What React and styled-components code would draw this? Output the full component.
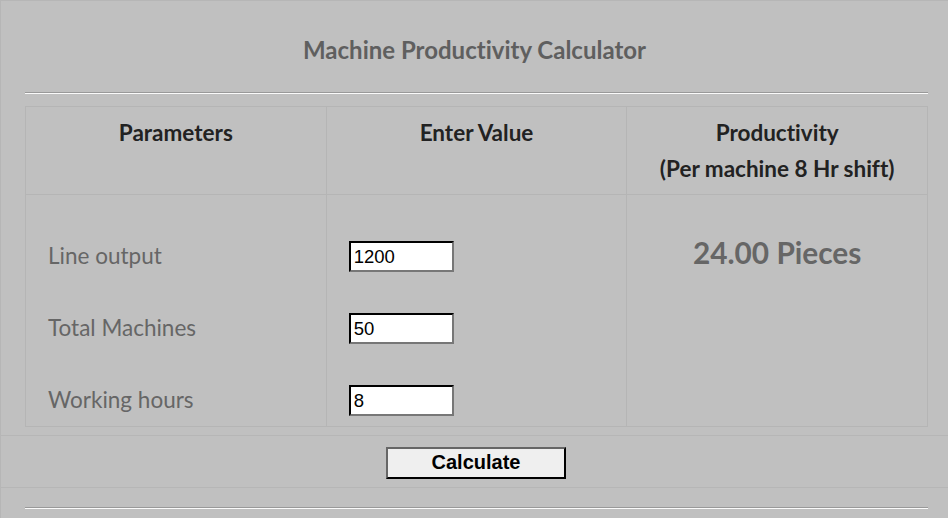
import React from "react";
import styled, { createGlobalStyle } from "styled-components";

const GlobalStyle = createGlobalStyle`
  html, body {
    margin: 0;
    padding: 0;
    background: #c0c0c0;
  }
  body {
    font-family: Lato, "Open Sans", sans-serif;
    font-variant-ligatures: none;
  }
`;

const Page = styled.div`
  min-height: 100vh;
  box-sizing: border-box;
  border-left: 1px solid #b6b6b6;
  border-top: 1px solid #b6b6b6;
`;

const Title = styled.h1`
  margin: 0;
  padding: 36px 0 0;
  height: 55px;
  text-align: center;
  font-size: 24px;
  line-height: 26px;
  font-weight: 700;
  color: #5f5f5f;
`;

const Rule = styled.hr`
  margin: 0 20px 0 24px;
  height: 0;
  border: none;
  border-top: 1px solid #999;
  border-bottom: 1px solid #fafafa;
`;

const TableWrap = styled.div`
  padding: 12px 20px 8px 24px;
`;

const Table = styled.div`
  display: grid;
  grid-template-columns: repeat(3, 1fr);
  border-top: 1px solid #b5b5b5;
  border-left: 1px solid #b5b5b5;
`;

const Cell = styled.div`
  box-sizing: border-box;
  border-right: 1px solid #b5b5b5;
  border-bottom: 1px solid #b5b5b5;
`;

const HeadCell = styled(Cell)`
  height: 88px;
  padding: 8px 0;
  text-align: center;
  font-size: 22.5px;
  line-height: 36px;
  font-weight: 700;
  color: #222;
`;

const BodyCell = styled(Cell)`
  height: 232px;
  padding: 40px 0 0 ${({ $indent }) => $indent || 0}px;
  display: flex;
  flex-direction: column;
  gap: 32px;
`;

const ParamRow = styled.div`
  height: 40px;
  display: flex;
  align-items: center;
`;

const Label = styled.span`
  font-size: 22.5px;
  color: #666;
`;

const ValueInput = styled.input`
  box-sizing: border-box;
  width: 105px;
  height: 31px;
  margin: 2px 0 0;
  padding: 2px 3px 0;
  font-family: Arial, "Liberation Sans", sans-serif;
  font-size: 18.5px;
  color: #000;
  background: #fff;
  border: 2px inset #777;
  border-top-color: #222;
  border-left-color: #222;
  outline: none;
`;

const ResultCell = styled(Cell)`
  height: 232px;
  padding-top: 40px;
  text-align: center;
  font-size: 29.8px;
  line-height: 36px;
  font-weight: 700;
  color: #666;
`;

const ActionRow = styled.div`
  height: 51px;
  display: flex;
  align-items: center;
  justify-content: center;
  border-top: 1px solid #b6b6b6;
  border-bottom: 1px solid #b6b6b6;
  margin-bottom: 19px;
`;

const CalcButton = styled.button`
  box-sizing: border-box;
  width: 180px;
  height: 32px;
  margin: 2px 0 0 3px;
  padding: 0;
  font-family: Arial, "Liberation Sans", sans-serif;
  font-size: 20px;
  font-weight: 700;
  color: #000;
  background: #efefef;
  border: 2px outset #666;
  border-right-color: #222;
  border-bottom-color: #222;
  cursor: pointer;
`;

const params = [
  { label: "Line output", value: "1200" },
  { label: "Total Machines", value: "50" },
  { label: "Working hours", value: "8" }
];

const App = () => {
  return (
    <>
      <GlobalStyle />
      <Page>
        <Title>Machine Productivity Calculator</Title>
        <Rule />
        <TableWrap>
          <Table>
            <HeadCell>Parameters</HeadCell>
            <HeadCell>Enter Value</HeadCell>
            <HeadCell>
              Productivity
              <br />
              (Per machine 8 Hr shift)
            </HeadCell>
            <BodyCell $indent={22}>
              {params.map(p => (
                <ParamRow key={p.label}>
                  <Label>{p.label}</Label>
                </ParamRow>
              ))}
            </BodyCell>
            <BodyCell $indent={22}>
              {params.map(p => (
                <ParamRow key={p.label}>
                  <ValueInput type="text" defaultValue={p.value} />
                </ParamRow>
              ))}
            </BodyCell>
            <ResultCell>24.00 Pieces</ResultCell>
          </Table>
        </TableWrap>
        <ActionRow>
          <CalcButton>Calculate</CalcButton>
        </ActionRow>
        <Rule />
      </Page>
    </>
  );
};

export default App;
